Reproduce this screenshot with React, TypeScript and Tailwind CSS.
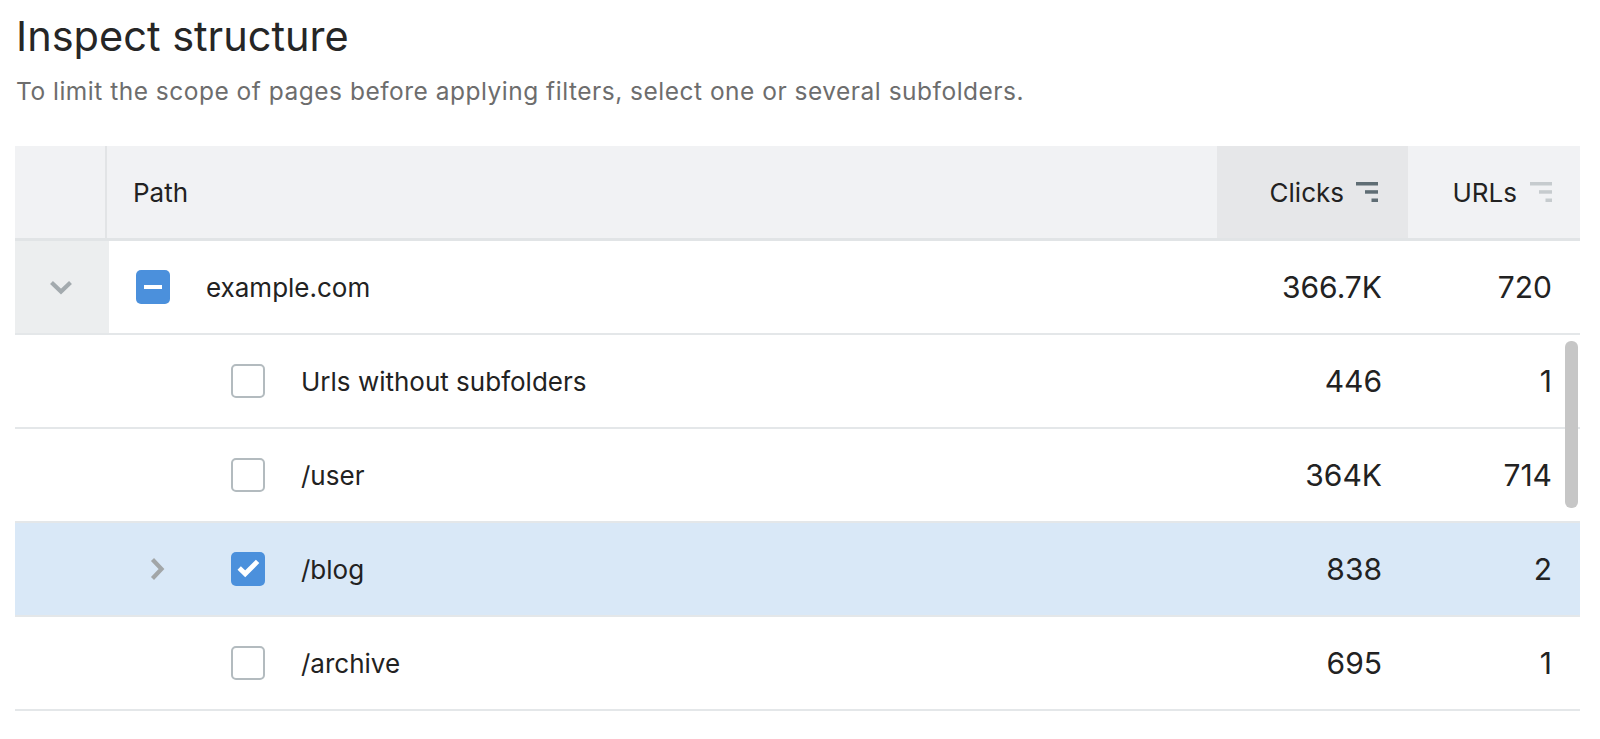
import React from "react";

function SortIcon({ color }: { color: string }) {
  return (
    <svg width="22" height="20" viewBox="0 0 22 20" fill={color}>
      <rect x="0" y="0" width="22" height="3.5" />
      <rect x="9" y="8.2" width="13" height="3.5" />
      <rect x="15.5" y="16.5" width="6.5" height="3.5" />
    </svg>
  );
}

function ChevronDown() {
  return (
    <svg width="24" height="15" viewBox="0 0 24 15" fill="none">
      <path d="M2.5 2.5 L12 11.5 L21.5 2.5" stroke="#a3aaae" strokeWidth="4.2" strokeLinecap="butt" strokeLinejoin="miter" />
    </svg>
  );
}

function ChevronRight() {
  return (
    <svg width="15" height="24" viewBox="0 0 15 24" fill="none">
      <path d="M2.5 2.5 L11.5 12 L2.5 21.5" stroke="#a2a6a8" strokeWidth="4.2" strokeLinecap="butt" strokeLinejoin="miter" />
    </svg>
  );
}

function Checkbox({ state }: { state: "none" | "some" | "all" }) {
  if (state === "none") {
    return <div className="w-[34px] h-[34px] rounded-[5px] border-2 border-[#b3bbbf] bg-white shrink-0" />;
  }
  return (
    <div className="w-[34px] h-[34px] rounded-[5px] bg-[#4b90dc] shrink-0 flex items-center justify-center">
      {state === "some" ? (
        <div className="w-[18px] h-[4px] bg-white" />
      ) : (
        <svg width="34" height="34" viewBox="0 0 34 34" fill="none">
          <path d="M8.2 16 L14.2 21.8 L26.6 9.4" stroke="white" strokeWidth="4.8" />
        </svg>
      )}
    </div>
  );
}

type Row = {
  label: string;
  clicks: string;
  urls: string;
  check: "none" | "some" | "all";
  chevron?: "right";
  selected?: boolean;
};

const rows: Row[] = [
  { label: "Urls without subfolders", clicks: "446", urls: "1", check: "none" },
  { label: "/user", clicks: "364K", urls: "714", check: "none" },
  { label: "/blog", clicks: "838", urls: "2", check: "all", chevron: "right", selected: true },
  { label: "/archive", clicks: "695", urls: "1", check: "none" },
];

export default function App() {
  return (
    <div className="w-[1600px] h-[739px] overflow-hidden bg-white font-['Inter',sans-serif] pt-[12px] pl-[16px]">
      <h1 className="text-[41.5px] leading-[48px] text-[#262626] font-normal">Inspect structure</h1>
      <p className="mt-[15px] text-[24.5px] leading-[32px] tracking-[0.5px] text-[#6d6d6d]">
        To limit the scope of pages before applying filters, select one or several subfolders.
      </p>
      <div className="mt-[39px] -ml-[1px] w-[1565px] text-[26px] text-[#222]">
        {/* header */}
        <div className="flex h-[95px] bg-[#f1f2f4] border-b-[3px] border-[#e1e4e6]">
          <div className="w-[92px] border-r-2 border-[#e2e4e6]" />
          <div className="flex-1 flex items-center pl-[26px]">Path</div>
          <div className="w-[191px] bg-[#e6e7e9] flex items-center justify-end gap-[12px] pr-[30px]">
            <span>Clicks</span>
            <SortIcon color="#5f6d74" />
          </div>
          <div className="w-[172px] flex items-center justify-end gap-[13px] pr-[28px]">
            <span>URLs</span>
            <SortIcon color="#c6cbce" />
          </div>
        </div>
        {/* root row */}
        <div className="flex h-[94px] border-b-2 border-[#e4e7e9]">
          <div className="w-[94px] bg-[#eceeef] flex items-center justify-center pr-[2px]">
            <ChevronDown />
          </div>
          <div className="flex-1 flex items-center pl-[27px]">
            <Checkbox state="some" />
            <span className="ml-[36px]">example.com</span>
          </div>
          <div className="w-[191px] flex items-center justify-end pr-[26px] text-[30px]">366.7K</div>
          <div className="w-[172px] flex items-center justify-end pr-[28px] text-[30px]">720</div>
        </div>
        {/* children */}
        <div className="relative">
          {rows.map((r) => (
            <div
              key={r.label}
              className={`flex h-[94px] border-b-2 border-[#e4e7e9] ${r.selected ? "bg-[#d9e8f7]" : "bg-white"}`}
            >
              <div className="w-[92px]" />
              <div className="flex-1 flex items-center">
                <div className="w-[124px] pl-[43px] flex items-center">
                  {r.chevron === "right" ? <ChevronRight /> : null}
                </div>
                <Checkbox state={r.check} />
                <span className="ml-[36px]">{r.label}</span>
              </div>
              <div className="w-[191px] flex items-center justify-end pr-[26px] text-[30px]">{r.clicks}</div>
              <div className="w-[172px] flex items-center justify-end pr-[28px] text-[30px]">{r.urls}</div>
            </div>
          ))}
          <div className="absolute top-[6px] right-[2px] w-[13px] h-[167px] rounded-[6px] bg-[#c6c6c6]" />
        </div>
      </div>
    </div>
  );
}
